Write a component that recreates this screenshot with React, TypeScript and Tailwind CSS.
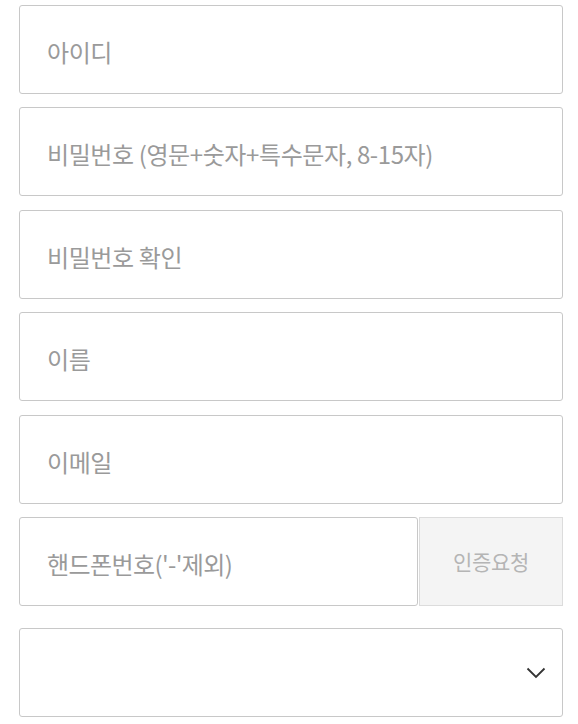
import React from "react";

const font = { fontFamily: '"Noto Sans CJK KR", "Noto Sans", sans-serif' };

function Field({ placeholder }: { placeholder: string }) {
  return (
    <div className="h-[89px] w-full rounded-[3px] border border-[#c8c8c8] bg-white flex items-center pl-[27px] pt-[5px]">
      <span className="text-[24px] text-[#9a9a9a] tracking-[-0.4px]">{placeholder}</span>
    </div>
  );
}

export default function App() {
  return (
    <div className="w-[578px] h-[724px] bg-white overflow-hidden" style={font}>
      <div className="flex flex-col pl-[19px] pr-[15px] pt-[5px]">
        <div className="flex flex-col gap-[13.4px]">
          <Field placeholder="아이디" />
          <Field placeholder="비밀번호 (영문+숫자+특수문자, 8-15자)" />
          <Field placeholder="비밀번호 확인" />
          <Field placeholder="이름" />
          <Field placeholder="이메일" />
          <div className="flex h-[89px]">
            <div className="flex-1 rounded-[3px] border border-[#c8c8c8] bg-white flex items-center pl-[27px] pt-[5px]">
              <span className="text-[24px] text-[#9a9a9a] tracking-[-0.6px]">핸드폰번호('-'제외)</span>
            </div>
            <div className="w-[144px] ml-[1px] border border-[#dcdcdc] bg-[#f4f4f4] flex items-center justify-center pt-[1px]">
              <span className="text-[21px] text-[#b5b5b5] tracking-[-0.3px]">인증요청</span>
            </div>
          </div>
        </div>
        <div className="mt-[22px] h-[89px] rounded-[3px] border border-[#c8c8c8] bg-white flex items-center justify-end pr-[16px] pt-[2px]">
          <svg width="20" height="12" viewBox="0 0 20 12" fill="none">
            <path d="M1.5 1.5 L10 10 L18.5 1.5" stroke="#333" strokeWidth="1.8" />
          </svg>
        </div>
      </div>
    </div>
  );
}
